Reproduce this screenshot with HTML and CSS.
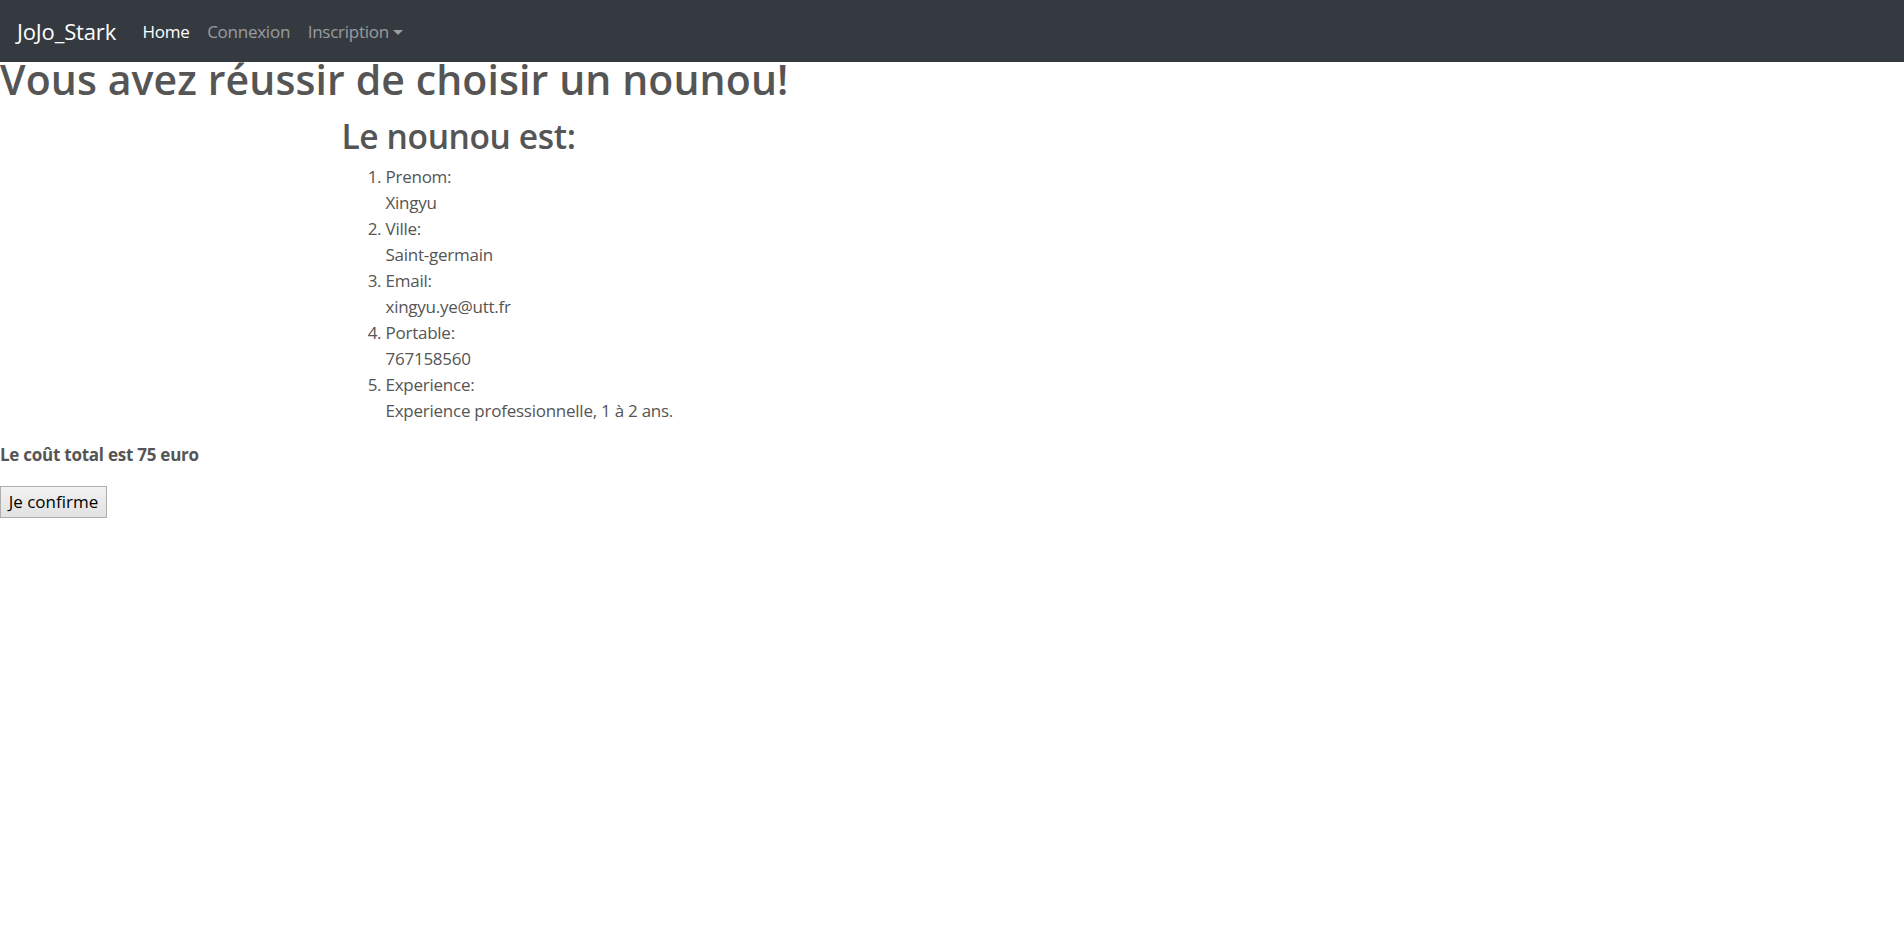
FILE: index.html
```html
<!DOCTYPE html>
<html lang="fr">
<head>
<meta charset="utf-8">
<title>JoJo_Stark</title>
<link rel="stylesheet" href="styles.css">
</head>
<body>
<nav class="navbar">
  <a class="brand" href="#">JoJo_Stark</a>
  <ul class="nav">
    <li><a class="nav-link active" href="#">Home</a></li>
    <li><a class="nav-link" href="#">Connexion</a></li>
    <li><a class="nav-link dropdown" href="#">Inscription<span class="caret"></span></a></li>
  </ul>
</nav>
<h1 class="title">Vous avez réussir de choisir un nounou!</h1>
<div class="container">
  <h2 class="subtitle">Le nounou est:</h2>
  <ol class="details">
    <li>Prenom:<br>Xingyu</li>
    <li>Ville:<br>Saint-germain</li>
    <li>Email:<br>xingyu.ye@utt.fr</li>
    <li>Portable:<br>767158560</li>
    <li>Experience:<br>Experience professionnelle, 1 à 2 ans.</li>
  </ol>
</div>
<p class="total"><b>Le coût total est 75 euro</b></p>
<form class="confirm-form">
  <button type="button" class="confirm-btn">Je confirme</button>
</form>
</body>
</html>
```
FILE: styles.css
```css
html, body {
  margin: 0;
  padding: 0;
}
body {
  font-family: "Open Sans", "Noto Sans", sans-serif;
  font-size: 17px;
  letter-spacing: -0.25px;
  line-height: 26px;
  color: #555555;
  background: #ffffff;
}
.navbar {
  display: flex;
  align-items: center;
  background: #343a40;
  padding: 1px 17px 0;
  height: 62px;
  box-sizing: border-box;
}
.brand {
  font-size: 22px;
  line-height: 33px;
  letter-spacing: -0.15px;
  color: #ffffff;
  text-decoration: none;
  margin-right: 17.6px;
}
.nav {
  display: flex;
  list-style: none;
  margin: 0;
  padding: 0;
}
.nav-link {
  display: block;
  padding: 8.8px 8.8px;
  color: rgba(255, 255, 255, 0.5);
  text-decoration: none;
}
.nav-link.active {
  color: #ffffff;
}
.caret {
  display: inline-block;
  margin-left: 4px;
  vertical-align: 3px;
  border-top: 5.3px solid;
  border-left: 5.3px solid transparent;
  border-right: 5.3px solid transparent;
}
.title {
  font-size: 41px;
  font-weight: 600;
  letter-spacing: 0.1px;
  line-height: 49px;
  margin: -7.5px 0 12px;
}
.container {
  box-sizing: border-box;
  max-width: 1254px;
  margin: 0 auto;
  padding: 0 16.5px;
}
.subtitle {
  font-size: 33.6px;
  font-weight: 600;
  letter-spacing: -0.4px;
  line-height: 40px;
  margin: 0 0 8.5px;
}
.details {
  margin: 0 0 18px;
  padding-left: 44px;
}
.total {
  margin: 0 0 17.6px;
}
.total b {
  font-weight: 700;
}
.confirm-form {
  margin: 0;
}
.confirm-btn {
  display: block;
  box-sizing: border-box;
  width: 107px;
  height: 32px;
  font-family: "Open Sans", "Noto Sans", sans-serif;
  font-size: 17px;
  letter-spacing: 0;
  line-height: 30px;
  color: #000000;
  padding: 0 4px;
  border: 1px solid #adadad;
  border-radius: 0;
  background: linear-gradient(#f2f2f2, #e2e2e2);
}
```
